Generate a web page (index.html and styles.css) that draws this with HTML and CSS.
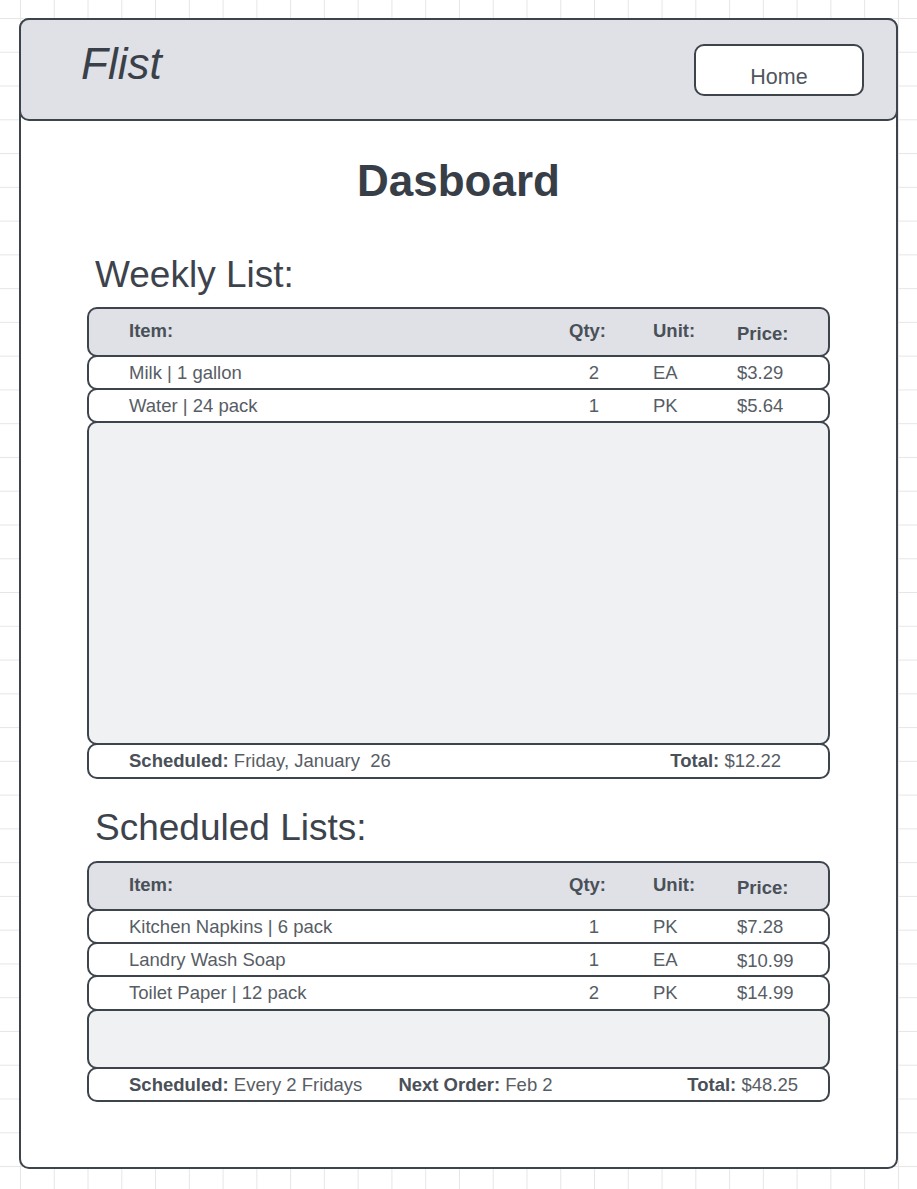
FILE: index.html
```html
<!DOCTYPE html>
<html lang="en">
<head>
<meta charset="utf-8">
<title>Flist - Dashboard</title>
<link rel="stylesheet" href="styles.css">
</head>
<body>
<div class="page">
  <header class="topbar">
    <div class="logo">Flist</div>
    <button class="home-btn">Home</button>
  </header>

  <h1 class="title">Dasboard</h1>

  <h2 class="section-title">Weekly List:</h2>
  <div class="table">
    <div class="row head">
      <span class="c-item">Item:</span>
      <span class="c-qty">Qty:</span>
      <span class="c-unit">Unit:</span>
      <span class="c-price price-h">Price:</span>
    </div>
    <div class="row item">
      <span class="c-item">Milk | 1 gallon</span>
      <span class="c-qty num">2</span>
      <span class="c-unit">EA</span>
      <span class="c-price">$3.29</span>
    </div>
    <div class="row item">
      <span class="c-item">Water | 24 pack</span>
      <span class="c-qty num">1</span>
      <span class="c-unit">PK</span>
      <span class="c-price">$5.64</span>
    </div>
    <div class="filler filler-lg"></div>
    <div class="row foot foot-1">
      <span><b>Scheduled:</b> Friday, January&nbsp; 26</span>
      <span class="total"><b>Total:</b> $12.22</span>
    </div>
  </div>

  <h2 class="section-title second">Scheduled Lists:</h2>
  <div class="table table-2">
    <div class="row head">
      <span class="c-item">Item:</span>
      <span class="c-qty">Qty:</span>
      <span class="c-unit">Unit:</span>
      <span class="c-price price-h">Price:</span>
    </div>
    <div class="row item">
      <span class="c-item">Kitchen Napkins | 6 pack</span>
      <span class="c-qty num">1</span>
      <span class="c-unit">PK</span>
      <span class="c-price">$7.28</span>
    </div>
    <div class="row item">
      <span class="c-item">Landry Wash Soap</span>
      <span class="c-qty num">1</span>
      <span class="c-unit">EA</span>
      <span class="c-price price-low">$10.99</span>
    </div>
    <div class="row item tall">
      <span class="c-item">Toilet Paper | 12 pack</span>
      <span class="c-qty num">2</span>
      <span class="c-unit">PK</span>
      <span class="c-price">$14.99</span>
    </div>
    <div class="filler filler-sm"></div>
    <div class="row foot foot-2">
      <span><b>Scheduled:</b> Every 2 Fridays</span>
      <span class="next"><b>Next Order:</b> Feb 2</span>
      <span class="total"><b>Total:</b> $48.25</span>
    </div>
  </div>
</div>
</body>
</html>
```

FILE: styles.css
```css
* { box-sizing: border-box; }

html, body { margin: 0; padding: 0; }

body {
  width: 917px;
  min-height: 1189px;
  font-family: "Liberation Sans", Arial, sans-serif;
  background-color: #ffffff;
  background-image:
    linear-gradient(to right, #e6e6e6 1px, transparent 1px),
    linear-gradient(to bottom, #e6e6e6 1px, transparent 1px);
  background-size: 33.77px 33.77px;
  background-position: 20px 18px;
  overflow: hidden;
}

.page {
  margin: 18px 0 0 19px;
  width: 879px;
  background: #ffffff;
  border: 2px solid #3e444c;
  border-radius: 10px;
  padding-bottom: 65px;
}

.topbar {
  margin: -2px -2px 0;
  height: 103px;
  background: #dfe1e6;
  border: 2px solid #3e444c;
  border-radius: 10px;
  display: flex;
  justify-content: space-between;
  align-items: flex-start;
}

.logo {
  margin: 22px 0 0 60px;
  font-size: 44px;
  line-height: 43px;
  font-style: italic;
  color: #3a4049;
}

.home-btn {
  margin: 24px 32px 0 0;
  width: 170px;
  height: 52px;
  padding: 15px 0 0;
  background: #ffffff;
  border: 2px solid #3e444c;
  border-radius: 10px;
  font-family: "Liberation Sans", Arial, sans-serif;
  font-size: 21.5px;
  line-height: 21px;
  color: #50565e;
  text-align: center;
  display: block;
}

.title {
  margin: 38px 0 0;
  font-size: 44px;
  line-height: 44px;
  font-weight: bold;
  text-align: center;
  color: #373e47;
}

.section-title {
  margin: 53px 0 0;
  padding-left: 74px;
  font-size: 37px;
  line-height: 37px;
  font-weight: normal;
  color: #3d434c;
}

.section-title.second { margin-top: 30px; }

.table {
  margin: 14px 66px 0;
  display: flex;
  flex-direction: column;
}

.table-2 { margin-top: 15px; }

.row {
  display: grid;
  grid-template-columns: 440px 84px 84px 1fr;
  align-items: center;
  padding-left: 40px;
  border: 2px solid #3e444c;
  border-radius: 10px;
  background: #ffffff;
  font-size: 18.5px;
  color: #575d65;
}

.row + .row, .row + .filler, .filler + .row { margin-top: -2px; }

.head {
  height: 50px;
  background: #dfe1e6;
  font-weight: bold;
  color: #4a5058;
}

.head .c-item, .head .c-qty, .head .c-unit { margin-bottom: 2px; }
.price-h { margin-top: 3px; }
.price-low { margin-top: 3px; }

.item { height: 35px; }
.item.tall { height: 36px; }

.num {
  text-align: center;
  padding-right: 34px;
}

.filler {
  background: #f0f1f3;
  border: 2px solid #3e444c;
  border-radius: 10px;
}

.filler-lg { height: 324px; }
.filler-sm { height: 60px; }

.foot {
  display: flex;
  align-items: center;
  height: 36px;
}

.foot-2 { height: 35px; }

.foot b { color: #4a5058; }

.foot .total { margin-left: auto; }
.foot-1 .total { padding-right: 47px; }
.foot-2 .total { padding-right: 30px; }
.foot-2 .next { margin-left: 36px; }
```
